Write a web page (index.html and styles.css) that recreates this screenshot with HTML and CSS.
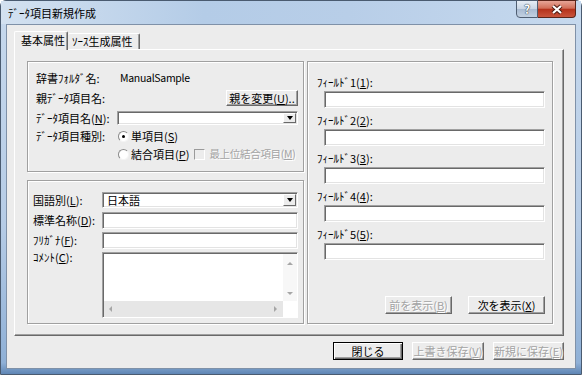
FILE: index.html
```html
<!DOCTYPE html>
<html lang="ja">
<head>
  <meta charset="UTF-8">
  <link rel="stylesheet" href="styles.css">
  <title>データ項目新規作成</title>
</head>
<body>
  <div id="window">
    <div class="titlebar">
      <span class="caption">ﾃﾞｰﾀ項目新規作成</span>
      <span class="capBtn capHelp">?</span>
      <span class="capBtn capClose">
        <svg width="14" height="11" viewBox="0 0 14 11">
          <path d="M3 2 L11 9 M11 2 L3 9" stroke="#4a1a12" stroke-width="4.2"/>
          <path d="M3 2 L11 9 M11 2 L3 9" stroke="#fff" stroke-width="2.2"/>
        </svg>
      </span>
    </div>

    <div class="client">
      <div class="tabs">
        <span class="tab tabActive">基本属性</span>
        <span class="tab">ｿｰｽ生成属性</span>
      </div>

      <div class="tabPanel">
        <div class="leftCol">
          <div class="group groupData">
            <span class="label">辞書ﾌｫﾙﾀﾞ名:</span>
            <span class="value">ManualSample</span>

            <span class="label">親ﾃﾞｰﾀ項目名:</span>
            <span class="cellEnd"><span class="btn btnParent">親を変更(<u>U</u>)..</span></span>

            <span class="label">ﾃﾞｰﾀ項目名(<u>N</u>):</span>
            <div class="combo comboSmall"><span class="comboText"></span><span class="comboArrow"></span></div>

            <span class="label">ﾃﾞｰﾀ項目種別:</span>
            <span class="option"><span class="radio checked"></span>単項目(<u>S</u>)</span>

            <span></span>
            <span class="option"><span class="radio"></span>結合項目(<u>P</u>)<span class="check"></span><span class="disabled tight">最上位結合項目(<u>M</u>)</span></span>
          </div>

          <div class="group groupLang">
            <span class="label">国語別(<u>L</u>):</span>
            <div class="combo"><span class="comboText">日本語</span><span class="comboArrow"></span></div>

            <span class="label">標準名称(<u>D</u>):</span>
            <div class="edit"></div>

            <span class="label">ﾌﾘｶﾞﾅ(<u>F</u>):</span>
            <div class="edit"></div>

            <span class="label labelTop">ｺﾒﾝﾄ(<u>C</u>):</span>
            <div class="memo">
              <div class="memoText"></div>
              <div class="vScroll"><span class="arrowUp"></span><span class="arrowDown"></span></div>
              <div class="hScroll"><span class="arrowLeft"></span><span class="arrowRight"></span></div>
              <div class="corner"></div>
            </div>
          </div>
        </div>

        <div class="group groupFields">
          <div class="field"><span class="label">ﾌｨｰﾙﾄﾞ1(<u>1</u>):</span><div class="edit"></div></div>
          <div class="field"><span class="label">ﾌｨｰﾙﾄﾞ2(<u>2</u>):</span><div class="edit"></div></div>
          <div class="field"><span class="label">ﾌｨｰﾙﾄﾞ3(<u>3</u>):</span><div class="edit"></div></div>
          <div class="field"><span class="label">ﾌｨｰﾙﾄﾞ4(<u>4</u>):</span><div class="edit"></div></div>
          <div class="field"><span class="label">ﾌｨｰﾙﾄﾞ5(<u>5</u>):</span><div class="edit"></div></div>
          <div class="navButtons">
            <span class="btn btnPrev disabled">前を表示(<u>B</u>)</span>
            <span class="btn btnNext">次を表示(<u>X</u>)</span>
          </div>
        </div>
      </div>

      <div class="footer">
        <span class="btn btnDefault">閉じる</span>
        <span class="btn btnSave disabled">上書き保存(<u>V</u>)</span>
        <span class="btn btnSaveNew disabled">新規に保存(<u>E</u>)</span>
      </div>
    </div>
  </div>
</body>
</html>
```

FILE: styles.css
```css
/* boite de dialogue style Vista / classique */
*{box-sizing: border-box;}
body
{
  margin: 0;
  font-family: "Noto Sans CJK JP", sans-serif;
  font-size: 11px;
  color: #000;
  background: #fff;
}
#window
{
  display: flex;
  flex-direction: column;
  width: 582px;
  height: 375px;
  padding: 0 5px 5px;
  border: 1px solid #4a5b70;
  border-radius: 6px 6px 0 0;
  background: linear-gradient(to bottom, #c7d9ed 0, #b6cce6 60%, #8fb0d6 97%, #5f86b5 100%);
}
.titlebar
{
  display: flex;
  height: 23px;
  background: linear-gradient(to right, #d3e1f0, #b4cce7 35%, #b8cee8 60%, #c6d9ee);
  margin: 0 -5px;
  padding: 0 6px 0 7px;
}
.caption
{
  padding-top: 5px;
  line-height: 14px;
  flex: 1;
}
.capBtn
{
  display: grid;
  place-content: center;
  height: 18px;
  margin-top: -1px;
  border: 1px solid #4f5e72;
}
.capHelp
{
  width: 22px;
  border-radius: 0 0 0 4px;
  font-weight: bold;
  font-size: 12px;
  line-height: 12px;
  color: #fff;
  text-shadow: 0 0 1px #1e2a3a, 0 0 1px #1e2a3a;
  background: linear-gradient(to bottom, #e6edf5, #c9d6e5 48%, #a9bbd2 52%, #c2d1e2);
}
.capClose
{
  width: 38px;
  margin-right: -1px;
  border-left: none;
  border-color: #5b2419;
  border-radius: 0 0 4px 0;
  background: linear-gradient(to bottom, #e7a597, #d16e58 45%, #b5321b 52%, #c9553d);
}
.client
{
  flex: 1;
  display: flex;
  flex-direction: column;
  border: 1px solid #7f91a8;
  background-color: #ececec;
}

/* onglets */
.tabs
{
  position: relative;
  z-index: 1;
  display: flex;
  align-items: flex-end;
  height: 19px;
  margin: 6px 0 -1px 7px;
}
.tab
{
  height: 16px;
  margin-bottom: 1px;
  padding: 0 4px 0 4px;
  line-height: 15px;
  white-space: nowrap;
  border-top: 1px solid #fff;
  border-right: 1px solid #696969;
  box-shadow: inset -1px 0 0 #a0a0a0;
  border-radius: 2px 2px 0 0;
  background-color: #ececec;
}
.tabActive
{
  height: 19px;
  margin-bottom: 0;
  width: 54px;
  padding: 1px 0 0 6px;
  border-left: 1px solid #fff;
}
.tabs .tab:nth-child(2)
{
  width: 72px;
  padding-left: 4px;
}
.tabPanel
{
  display: flex;
  gap: 3px;
  width: 550px;
  height: 287px;
  margin-left: 7px;
  padding: 11px 10px 11px 12px;
  border: 1px solid;
  border-color: #fff #696969 #696969 #fff;
  box-shadow: inset -1px -1px 0 #a0a0a0;
}
.leftCol
{
  display: flex;
  flex-direction: column;
  gap: 8px;
  width: 277px;
}
.group
{
  border: 1px solid #a0a0a0;
  box-shadow: inset 1px 1px 0 #fff, 1px 1px 0 #fff;
}
.label
{
  line-height: 14px;
  white-space: nowrap;
}
u
{
  text-decoration: underline;
  text-underline-offset: 1px;
}

/* groupe 1 */
.groupData
{
  display: grid;
  grid-template-columns: 81px 1fr;
  grid-template-rows: 20px 20px 19px 18px 18px;
  align-items: center;
  height: 111px;
  padding: 6px 5px 0 8px;
}
.value
{
  padding-left: 3px;
  line-height: 14px;
  font-size: 10.5px;
  letter-spacing: -0.3px;
}
.cellEnd
{
  display: flex;
  justify-content: flex-end;
}
.option
{
  display: flex;
  align-items: center;
  line-height: 14px;
  white-space: nowrap;
}
.radio
{
  position: relative;
  width: 11px;
  height: 11px;
  margin: 0 2px 0 1px;
  border: 1px solid;
  border-color: #8a8a8a #f4f4f4 #f4f4f4 #8a8a8a;
  border-radius: 50%;
  background-color: #fff;
}
.radio.checked::after
{
  content: "";
  position: absolute;
  top: 3px;
  left: 3px;
  width: 3px;
  height: 3px;
  border-radius: 50%;
  background-color: #000;
}
.check
{
  width: 11px;
  height: 11px;
  margin: 0 4px 0 5px;
  border: 1px solid;
  border-color: #9a9a9a #fff #fff #9a9a9a;
  background-color: #ececec;
}
.disabled
{
  color: #a3a3a3;
  text-shadow: 1px 1px 0 #fff;
}
.tight
{
  font-size: 10.5px;
  letter-spacing: -0.3px;
}

/* boutons */
.btn
{
  display: flex;
  justify-content: center;
  align-items: center;
  height: 18px;
  line-height: 14px;
  white-space: nowrap;
  border: 1px solid;
  border-color: #fff #696969 #696969 #fff;
  box-shadow: inset -1px -1px 0 #a0a0a0;
  background-color: #ececec;
}
.btnParent
{
  width: 72px;
  height: 16px;
}
.btnDefault
{
  width: 70px;
  border: 1px solid #000;
  box-shadow: inset 1px 1px 0 #fff, inset -1px -1px 0 #696969, inset -2px -2px 0 #a0a0a0;
}
.btnSave { width: 72px; }
.btnSaveNew { width: 71px; }

/* champs */
.edit
{
  height: 17px;
  border: 1px solid;
  border-color: #a0a0a0 #fff #fff #a0a0a0;
  box-shadow: inset 1px 1px 0 #696969, inset -1px -1px 0 #e3e3e3;
  background-color: #fff;
}
.combo
{
  display: flex;
  height: 16px;
  padding: 2px 2px 2px 3px;
  border: 1px solid;
  border-color: #a0a0a0 #fff #fff #a0a0a0;
  box-shadow: inset 1px 1px 0 #696969, inset -1px -1px 0 #e3e3e3;
  background-color: #fff;
}
.comboSmall
{
  height: 14px;
}
.comboText
{
  flex: 1;
  line-height: 11px;
  padding-left: 1px;
}
.comboArrow
{
  display: grid;
  place-content: center;
  width: 13px;
  margin: -1px -1px -1px 0;
  border: 1px solid;
  border-color: #fff #696969 #696969 #fff;
  background-color: #ececec;
}
.comboArrow::after
{
  content: "";
  border-top: 4px solid #000;
  border-left: 3.5px solid transparent;
  border-right: 3.5px solid transparent;
}

/* groupe 2 */
.groupLang
{
  display: grid;
  grid-template-columns: 69px 1fr;
  grid-template-rows: 16px 16px 16px 1fr;
  row-gap: 4px;
  align-items: center;
  flex: 1;
  padding: 11px 5px 5px 5px;
}
.labelTop
{
  align-self: start;
  line-height: 10px;
}
.memo
{
  display: grid;
  grid-template-columns: 1fr 14px;
  grid-template-rows: 1fr 16px;
  align-self: stretch;
  border: 1px solid;
  border-color: #a0a0a0 #fff #fff #a0a0a0;
  box-shadow: inset 1px 1px 0 #696969;
  padding: 1px 0 0 1px;
  background-color: #fff;
}
.vScroll
{
  display: flex;
  flex-direction: column;
  justify-content: space-between;
  align-items: center;
  padding: 8px 0 6px;
  background-color: #f7f7f7;
}
.hScroll
{
  display: flex;
  justify-content: space-between;
  align-items: center;
  padding: 0 6px 0 5px;
  background-color: #e6e6e6;
}
.corner { background-color: #fff; }
.arrowUp
{
  border-bottom: 3px solid #a6a6a6;
  border-left: 3px solid transparent;
  border-right: 3px solid transparent;
}
.arrowDown
{
  border-top: 3px solid #a6a6a6;
  border-left: 3px solid transparent;
  border-right: 3px solid transparent;
}
.arrowLeft
{
  border-right: 3px solid #a6a6a6;
  border-top: 3px solid transparent;
  border-bottom: 3px solid transparent;
}
.arrowRight
{
  border-left: 3px solid #a6a6a6;
  border-top: 3px solid transparent;
  border-bottom: 3px solid transparent;
}

/* groupe des champs */
.groupFields
{
  display: flex;
  flex-direction: column;
  gap: 5px;
  width: 246px;
  padding: 13px 7px 9px 9px;
}
.field
{
  display: flex;
  flex-direction: column;
  gap: 2px;
}
.field .edit
{
  margin-left: 7px;
}
.navButtons
{
  display: flex;
  justify-content: flex-end;
  gap: 16px;
  margin-top: auto;
}
.btnPrev { width: 67px; }
.btnNext { width: 77px; }

/* bas */
.footer
{
  display: flex;
  justify-content: flex-end;
  gap: 9px;
  width: 550px;
  margin: 6px 0 0 7px;
}
```
